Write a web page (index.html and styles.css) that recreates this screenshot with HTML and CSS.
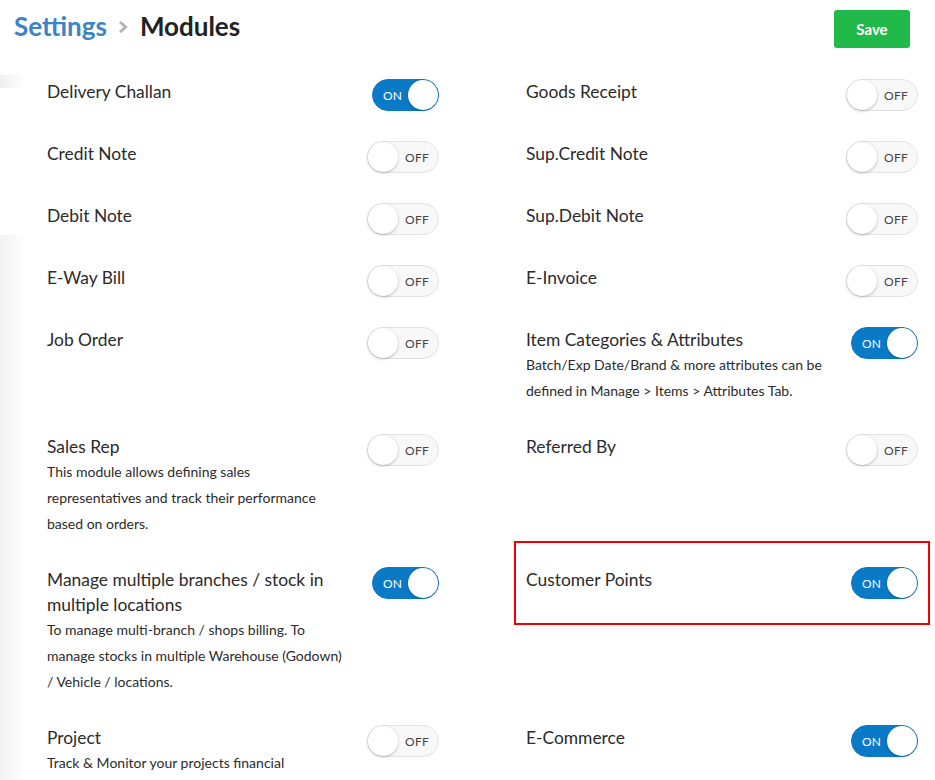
FILE: index.html
```html
<!DOCTYPE html>
<html lang="en">
<head>
    <meta charset="UTF-8">
    <meta name="viewport" content="width=device-width, initial-scale=1.0">
    <title>Settings - Modules</title>
    <link rel="stylesheet" href="styles.css">
</head>
<body>
    <div class="header">
        <h1 class="crumbs">
            <span class="crumb-link">Settings</span>
            <svg class="crumb-sep" width="10" height="12" viewBox="0 0 10 12"><polyline points="2,1 7.5,6 2,11" fill="none" stroke="#b5b5b5" stroke-width="3"/></svg>
            <span class="crumb-current">Modules</span>
        </h1>
        <button class="save-btn">Save</button>
    </div>

    <div class="modules">
        <div class="module">
            <div class="module-text"><div class="module-name">Delivery Challan</div></div>
            <div class="toggle on"><span class="toggle-label">ON</span><span class="knob"></span></div>
        </div>
        <div class="module">
            <div class="module-text"><div class="module-name">Goods Receipt</div></div>
            <div class="toggle"><span class="knob"></span><span class="toggle-label">OFF</span></div>
        </div>

        <div class="module">
            <div class="module-text"><div class="module-name">Credit Note</div></div>
            <div class="toggle"><span class="knob"></span><span class="toggle-label">OFF</span></div>
        </div>
        <div class="module">
            <div class="module-text"><div class="module-name">Sup.Credit Note</div></div>
            <div class="toggle"><span class="knob"></span><span class="toggle-label">OFF</span></div>
        </div>

        <div class="module">
            <div class="module-text"><div class="module-name">Debit Note</div></div>
            <div class="toggle"><span class="knob"></span><span class="toggle-label">OFF</span></div>
        </div>
        <div class="module">
            <div class="module-text"><div class="module-name">Sup.Debit Note</div></div>
            <div class="toggle"><span class="knob"></span><span class="toggle-label">OFF</span></div>
        </div>

        <div class="module">
            <div class="module-text"><div class="module-name">E-Way Bill</div></div>
            <div class="toggle"><span class="knob"></span><span class="toggle-label">OFF</span></div>
        </div>
        <div class="module">
            <div class="module-text"><div class="module-name">E-Invoice</div></div>
            <div class="toggle"><span class="knob"></span><span class="toggle-label">OFF</span></div>
        </div>

        <div class="module">
            <div class="module-text"><div class="module-name">Job Order</div></div>
            <div class="toggle"><span class="knob"></span><span class="toggle-label">OFF</span></div>
        </div>
        <div class="module">
            <div class="module-text">
                <div class="module-name">Item Categories &amp; Attributes</div>
                <div class="module-desc">Batch/Exp Date/Brand &amp; more attributes can be defined in Manage &gt; Items &gt; Attributes Tab.</div>
            </div>
            <div class="toggle on"><span class="toggle-label">ON</span><span class="knob"></span></div>
        </div>

        <div class="module">
            <div class="module-text">
                <div class="module-name">Sales Rep</div>
                <div class="module-desc">This module allows defining sales representatives and track their performance based on orders.</div>
            </div>
            <div class="toggle"><span class="knob"></span><span class="toggle-label">OFF</span></div>
        </div>
        <div class="module">
            <div class="module-text"><div class="module-name">Referred By</div></div>
            <div class="toggle"><span class="knob"></span><span class="toggle-label">OFF</span></div>
        </div>

        <div class="module">
            <div class="module-text">
                <div class="module-name">Manage multiple branches / stock in multiple locations</div>
                <div class="module-desc">To manage multi-branch / shops billing. To manage stocks in multiple Warehouse (Godown) / Vehicle / locations.</div>
            </div>
            <div class="toggle on"><span class="toggle-label">ON</span><span class="knob"></span></div>
        </div>
        <div class="module highlighted">
            <div class="module-text"><div class="module-name">Customer Points</div></div>
            <div class="toggle on"><span class="toggle-label">ON</span><span class="knob"></span></div>
        </div>

        <div class="module">
            <div class="module-text">
                <div class="module-name">Project</div>
                <div class="module-desc">Track &amp; Monitor your projects financial</div>
            </div>
            <div class="toggle"><span class="knob"></span><span class="toggle-label">OFF</span></div>
        </div>
        <div class="module">
            <div class="module-text"><div class="module-name">E-Commerce</div></div>
            <div class="toggle on"><span class="toggle-label">ON</span><span class="knob"></span></div>
        </div>
    </div>
</body>
</html>
```

FILE: styles.css
```css
body {
    margin: 0;
    font-family: Lato, "Open Sans", Arial, sans-serif;
    color: #2b2b2b;
    background-color: #ffffff;
    background-image:
        linear-gradient(to right, #efefef, #ffffff),
        linear-gradient(to right, #f2f2f2, #ffffff);
    background-repeat: no-repeat;
    background-size: 26px 13px, 26px 600px;
    background-position: 0 75px, 0 235px;
    overflow: hidden;
}
.header {
    display: flex;
    justify-content: space-between;
    align-items: flex-start;
    padding: 10px 25px 0 14px;
    height: 69px;
}
.crumbs {
    margin: 0;
    font-size: 26px;
    font-weight: 700;
    line-height: 32px;
    display: flex;
    align-items: center;
}
.crumb-link {
    color: #3d84c6;
}
.crumb-sep {
    margin: 2px 12px 0 11px;
}
.crumb-current {
    color: #222222;
}
.save-btn {
    width: 76px;
    height: 38px;
    border: none;
    border-radius: 3px;
    background-color: #21b94a;
    color: #ffffff;
    font-family: Lato, Arial, sans-serif;
    font-weight: 700;
    font-size: 15px;
    cursor: pointer;
}
.modules {
    display: grid;
    grid-template-columns: 392px 392px;
    column-gap: 87px;
    row-gap: 30px;
    padding-left: 47px;
    align-items: start;
}
.module {
    display: flex;
    align-items: flex-start;
    position: relative;
}
.module-text {
    width: 300px;
}
.module-name {
    font-size: 17.4px;
    line-height: 25px;
    color: #2b2b2b;
}
.module-desc {
    font-size: 14px;
    line-height: 26px;
    color: #2b2b2b;
}
.highlighted::before {
    content: "";
    position: absolute;
    top: -26px;
    bottom: -26px;
    left: -12px;
    right: -12px;
    border: 2px solid #f00000;
}
.toggle {
    margin-left: auto;
    width: 72px;
    height: 32px;
    box-sizing: border-box;
    border-radius: 16px;
    border: 1px solid #e3e3e3;
    background: #f8f8f8;
    display: flex;
    align-items: center;
    flex-shrink: 0;
}
.toggle.on {
    width: 67px;
    background: #0b7ac6;
    border-color: #0b7ac6;
}
.knob {
    width: 30px;
    height: 30px;
    border-radius: 50%;
    background: #ffffff;
    box-shadow: 0 1px 3px rgba(0, 0, 0, 0.25);
}
.toggle-label {
    flex: 1;
    text-align: center;
    font-size: 12px;
    color: #444444;
    letter-spacing: 0.2px;
    padding-right: 2px;
}
.toggle.on .toggle-label {
    color: #ffffff;
    padding-left: 4px;
    padding-right: 0;
}
```
